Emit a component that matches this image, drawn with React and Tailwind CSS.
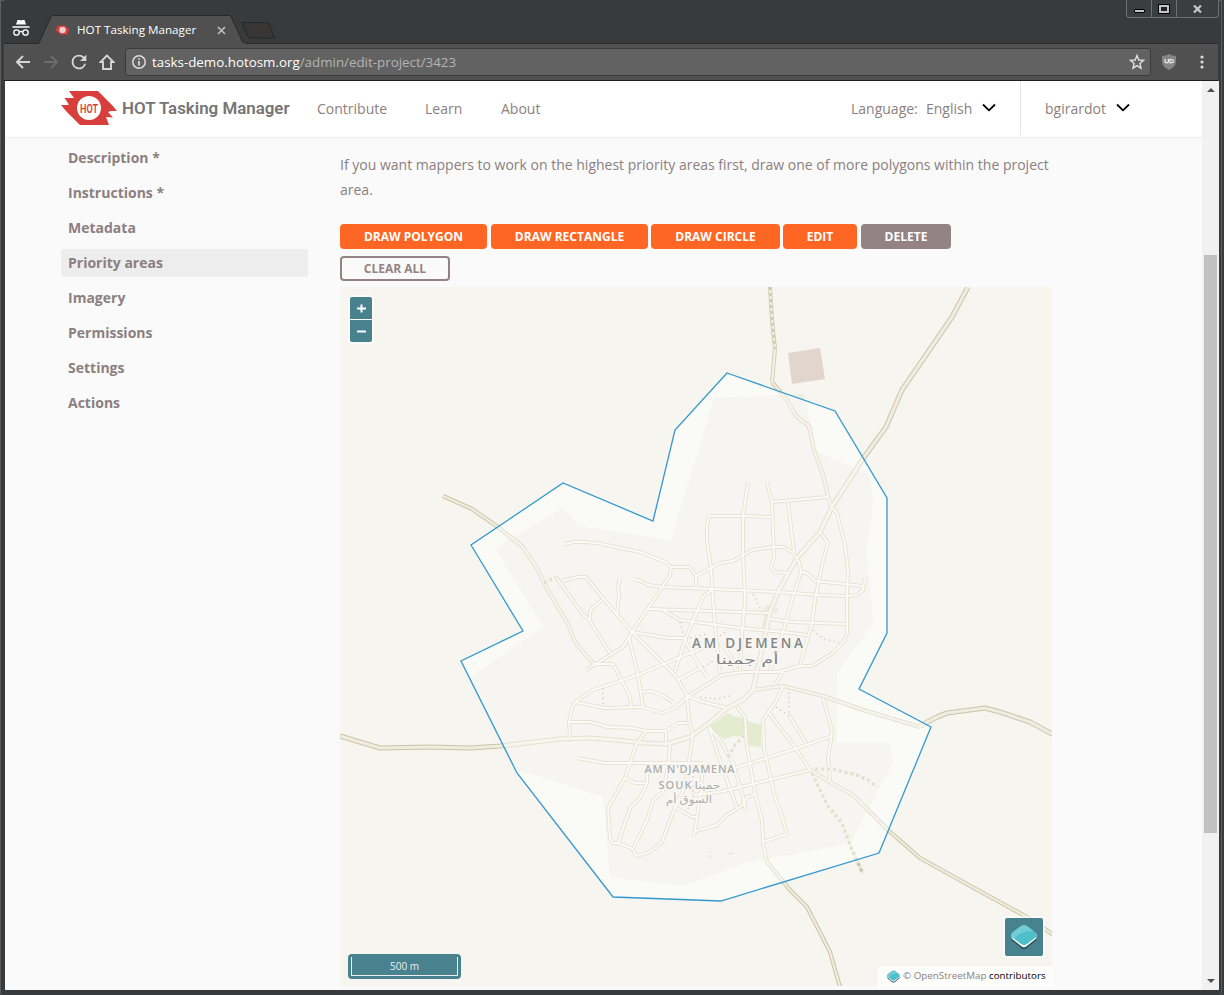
import React from "react";

const AREA =
  "727,373 835,411 887,498 887,633 859,689 931,727 879,853 721,901 613,897 517,773 461,661 523,631 471,545 563,483 653,521 675,430";

const RESIDENTIAL =
  "714,398 804,394 817,452 870,474 873,503 867,553 871,600 873,623 837,673 837,743 888,743 894,760 853,838 843,845 745,863 683,886 610,877 603,797 560,783 515,769 469,678 543,627 495,548 563,508 579,526 671,540";

const STREETS = [
  "565,544 574,542 585,542 597,543 640,552 665,562 671,567 670,575 657,595 632,632 623,647 586,670",
  "556,577 582,613 589,620 610,653",
  "562,581 578,577 586,577 602,597 632,632 675,675 687,695 689,720 693,735 688,768 685,787 675,807 662,842 650,852 636,856 633,849",
  "602,600 592,608 590,613 590,620",
  "620,578 618,587 619,595 617,616",
  "633,579 641,581 648,585 663,587 713,589 778,592 820,595 847,596 857,595 863,590 865,578",
  "593,664 613,664 621,679 630,697 631,707",
  "632,632 668,638 685,638",
  "629,638 638,675 643,707",
  "648,609 740,612 770,613",
  "663,610 680,620 740,628 783,632 807,635",
  "713,589 703,597 685,640 675,672",
  "685,640 693,655 707,677",
  "570,737 569,722 572,708 575,702 593,690 638,675 678,658 703,648",
  "575,702 605,708 642,707 662,713 675,708 687,697 722,675 743,672 778,672 800,666 812,666 833,653 844,641 847,633 847,593 848,570 845,545 840,525 837,513 831,507",
  "678,680 702,667",
  "642,692 650,691 657,693 665,697 673,702",
  "687,696 700,701 727,708",
  "709,516 743,516 772,517",
  "709,516 707,527 707,540 711,568 713,600 715,625 720,673",
  "720,643 730,655 736,670",
  "748,482 743,517 743,553 745,600 742,633 740,670",
  "767,483 772,502 774,557 771,567 775,572 787,573",
  "772,502 828,497",
  "788,502 791,527 794,552",
  "672,567 689,567 696,576 720,563 733,561 752,550 773,547 783,547 792,552 799,562 801,572 792,600 783,632 770,670",
  "696,576 696,588",
  "801,572 807,573 815,581 863,586",
  "820,532 828,543 823,560 815,600 812,623 800,665",
  "770,619 792,622 847,624",
  "783,672 775,685",
  "783,687 775,703 763,720 764,748 775,798 780,810 787,834 763,842",
  "769,713 792,743 810,770",
  "789,715 806,743",
  "823,698 832,730 831,740 828,758 830,781",
  "737,707 745,717 747,747 755,793 762,820 763,843 767,862",
  "569,722 590,722 608,727 632,728 646,731 666,731 678,723 688,723",
  "646,731 636,745 625,778 608,808 610,838 613,843 618,843 633,849 647,820 653,800 663,792 668,767 670,745",
  "577,758 605,763 643,763 703,763",
  "666,731 666,745",
  "625,778 635,783 646,783",
  "647,764 647,783 640,798 630,808 618,843",
  "675,807 692,817 697,817",
  "703,764 701,790 697,817 694,837",
  "696,831 717,825 727,815 743,805 747,797 755,795",
  "709,727 717,752 737,808",
  "709,727 720,740 733,763 743,797 746,812",
  "693,795 720,792 810,770",
  "735,768 792,750 832,736",
];

const ROADS = [
  "443,496 472,509 498,527 523,547 538,570 545,585 569,626 572,635 577,645 593,663",
  "772,382 787,400 796,416 809,426 814,450 823,475 831,507",
  "753,690 783,686 823,696 863,710 920,727",
  "767,862 790,890 807,907 830,952 840,987",
  "810,770 830,782 853,795 888,830 920,858 983,893 1027,917 1055,936",
];

const MAIN = [
  "968,287 952,317 902,390 886,427 862,460 832,507 820,532 797,558 778,592 770,612 753,690 743,700 727,708 708,724 690,737 667,744 645,743 615,740 590,738 560,739 500,746 470,748 430,747 380,748 340,736",
  "920,726 937,717 947,713 985,708 1000,712 1030,722 1054,735",
];

const TRACKS = [
  "815,769 833,769 857,775 868,780 877,787",
  "812,773 827,805 842,823 852,850 863,874",
  "728,757 735,745 745,734",
  "544,583 556,577",
];

const PATHS = [
  "680,622 684,636",
  "603,688 603,706",
  "700,697 718,699 733,695",
  "753,594 762,612",
  "813,630 822,638 839,643",
  "789,692 789,714",
  "776,707 789,716",
  "703,667 715,660",
  "693,776 693,798",
  "688,809 688,805",
  "690,638 706,634",
  "720,636 728,630",
];

function Lines({ list, color, width, dash }) {
  return list.map((points, i) => (
    <polyline key={i} points={points} fill="none" stroke={color} strokeWidth={width} strokeDasharray={dash} strokeLinejoin="round" />
  ));
}

function CityMap() {
  return (
    <svg className="block h-[699px] w-[712px]" viewBox="340 287 712 699">
      <rect x="340" y="287" width="712" height="699" fill="#f6f5f0" />
      <polygon points={RESIDENTIAL} fill="#eeece5" />
      <polygon points="788,353 820,348 825,379 792,384" fill="#e2d5cb" />
      <polygon points="709,727 728,713 735,717 740,717 745,720 761,725 761,747 749,746 747,737 733,736 725,739 712,732" fill="#cbdaa4" />
      <path d="M763 609l3-4h4l3 4-5 3-3 19h-4l4-20z" fill="#d5dfb9" />
      <path d="M774 608h4v5h-4zM708 855h3v3h-3zM727 853l7-1v2l-7 1z" fill="#dad7d4" />
      <Lines list={STREETS} color="#cfc9aa" width={3.9} />
      <Lines list={ROADS} color="#cbc5a7" width={4.200} />
      <polyline points="770,287 772,320 775,349 772,382" fill="none" stroke="#d0cab0" strokeWidth="4" />
      <Lines list={MAIN} color="#cbc5a7" width={5.200} />
      <Lines list={STREETS} color="#f8f6ef" width={2} />
      <Lines list={ROADS} color="#f0eddf" width={2.200} />
      <polyline points="770,287 772,320 775,349 772,382" fill="none" stroke="#f2efe3" strokeWidth="2.400" />
      <polyline points="770,287 772,320 775,349" fill="none" stroke="#cfc9ae" strokeWidth="2.400" strokeDasharray="3 3" />
      <Lines list={MAIN} color="#f0ecdf" width={3.200} />
      <Lines list={TRACKS} color="#eeeadd" width={3.600} />
      <Lines list={TRACKS} color="#c9c3a4" width={3.200} dash="3 3" />
      <Lines list={PATHS} color="#d09f85" width={1.500} dash="1.500 3.300" />
      <polygon points={AREA} fill="#ffffff" fillOpacity="0.48" stroke="#3399cc" strokeWidth="1.300" />
      <g textAnchor="middle" fontFamily="'Open Sans', 'DejaVu Sans', sans-serif" paintOrder="stroke" stroke="#f8f7f3" strokeWidth="3" strokeLinejoin="round">
        <text x="747.500" y="648" fontSize="13.500" fontWeight="600" fill="#858585" textLength="111">AM DJEMENA</text>
        <text x="747" y="664" fontSize="12.500" fill="#858585" textLength="63" lengthAdjust="spacingAndGlyphs">أم جمينا</text>
        <text x="689.500" y="773" fontSize="11" fontWeight="600" fill="#adadad" textLength="90">AM N'DJAMENA</text>
        <text x="675" y="789" fontSize="11" fontWeight="600" fill="#adadad" textLength="33">SOUK</text>
        <text x="707.500" y="789" fontSize="10.500" fill="#adadad" textLength="26" lengthAdjust="spacingAndGlyphs">جمينا</text>
        <text x="689" y="803" fontSize="10.500" fill="#adadad" textLength="46" lengthAdjust="spacingAndGlyphs">السوق أم</text>
      </g>
    </svg>
  );
}

function Tile({ className }) {
  return (
    <svg viewBox="0 0 26 26" className={className}>
      <path d="M.5 11.500v3.500q0 1.500 1.500 2.500l8.500 6.800q2.500 1.700 5 0L24 17.500q1.500-1 1.500-2.500v-3.500z" fill="#2c5664" />
      <path d="M.5 10v3q0 1.500 1.500 2.500l8.500 6.800q2.500 1.700 5 0L24 15.500q1.500-1 1.500-2.500v-3z" fill="#fff" />
      <path d="M2 8 10 2q3-2 6 0l8 6q1.500 1.200 1.500 3t-1.500 3l-8 6q-3 2-6 0l-8-6Q.5 12.800.5 11T2 8z" fill="#50bfcc" />
      <path d="M2 8 10 2q3-2 6 0l6.500 5Q9 6.500 3.500 15L2 14Q.5 12.800.5 11T2 8z" fill="#70ccd6" />
    </svg>
  );
}

function HotMark({ className, label }) {
  return (
    <svg viewBox="0 0 56 34" className={className}>
      <path d="M8 0H37L51 14 56 20H50L47 21 52 26.500 45 26 48 34H19L5 20 0 14H6L8 13.500 3.500 7H13z" fill="#d83e3c" />
      <circle cx="28" cy="17" r="12" fill={label ? "#fff" : "#f5cccb"} />
      {label && (
        <text x="28" y="21.500" textAnchor="middle" fontFamily="Roboto, sans-serif" fontWeight="600" fontSize="12" textLength="18" lengthAdjust="spacingAndGlyphs" fill="#d83e3c">HOT</text>
      )}
    </svg>
  );
}

function Chevron() {
  return (
    <svg viewBox="0 0 14 9" className="mb-px h-[9px] w-[14px]" fill="none" stroke="#000" strokeWidth="1.800">
      <path d="M1 1.500 7 7.300 13 1.500" />
    </svg>
  );
}

function TabStrip() {
  return (
    <div className="relative flex h-[43px] bg-[#373b3e]">
      <svg viewBox="0 0 18 18" className="mt-[19px] ml-[8px] h-[18px] w-[18px]" fill="none" stroke="#fff" strokeWidth="1.300">
        <path d="M5.500 1h2l1.500.5L10.500 1h2L14 5.500H4z" fill="#fff" stroke="none" />
        <path d="M.5 8h17" strokeWidth="1.500" />
        <circle cx="4.500" cy="13.500" r="2.700" />
        <circle cx="13.500" cy="13.500" r="2.700" />
        <path d="M7.200 13q1.800-1 3.600 0" />
      </svg>
      <div className="relative mt-[15px] ml-[9px] h-[29px] w-[206px]">
        <svg viewBox="0 0 206 29" className="absolute inset-0 h-[29px] w-[206px]">
          <path d="M0 29 12 1.500Q12.500.5 14 .5H190Q191.500.5 192 1.500L204 28H206V29z" fill="#505050" />
          <path d="M0 28 12 1.500Q12.500.5 14 .5H190Q191.500.5 192 1.500L204 28" fill="none" stroke="#27292b" />
        </svg>
        <div className="relative flex h-[29px] items-center pt-px pl-[16px]">
          <HotMark className="h-[10px] w-[15px]" />
          <span className="ml-[7px] w-[119px] text-[11.650px] leading-none whitespace-nowrap text-white">HOT Tasking Manager</span>
          <svg viewBox="0 0 9 9" className="ml-[21px] h-[9px] w-[9px]" stroke="#bdbdbd" strokeWidth="1.700">
            <path d="M1 1 8 8M8 1 1 8" />
          </svg>
        </div>
      </div>
      <svg viewBox="0 0 34 17" className="mt-[22px] -ml-[4px] h-[17px] w-[34px]">
        <path d="M1 .5H26q1.500 0 2 1L33.500 16H10Q8 16 7 14.500z" fill="#373635" stroke="#242628" />
      </svg>
      <div className="absolute top-0 right-[-1px] flex h-[18px] w-[93px] rounded-b-[4px] border border-t-0 border-[#6d7071] bg-[#3b3e40]">
        <div className="flex w-[25px] items-center justify-center border-r border-[#6d7071]">
          <span className="mt-[5px] h-[4px] w-[11px] rounded-[1px] border-[0.5px] border-black bg-[#c4c4c4]" />
        </div>
        <div className="flex w-[25px] items-center justify-center border-r border-[#6d7071]">
          <span className="h-[8px] w-[10px] border-2 border-[#c4c4c4] bg-[#222] outline outline-[0.5px] outline-black" />
        </div>
        <div className="flex flex-1 items-center justify-center">
          <svg viewBox="0 0 9 8" className="h-[8px] w-[9px]" stroke="#c8c8c8" strokeWidth="2.200">
            <path d="M1 .5 8 7.500M8 .5 1 7.500" />
          </svg>
        </div>
      </div>
    </div>
  );
}

function Toolbar() {
  return (
    <div className="flex h-[38px] items-center border-t border-b border-t-[#2b2b2b] border-b-[#1f1f1f] bg-[#505050] pl-[11px]">
      <svg viewBox="0 0 16 14" className="h-[14px] w-[16px]" fill="none" stroke="#d6d6d6" strokeWidth="2">
        <path d="M15 7H2M8 1 2 7l6 6" />
      </svg>
      <svg viewBox="0 0 16 14" className="ml-[12px] h-[14px] w-[16px]" fill="none" stroke="#6c6c6c" strokeWidth="1.800">
        <path d="M1 7h13M8 1l6 6-6 6" />
      </svg>
      <svg viewBox="0 0 24 24" className="ml-[9px] h-[22px] w-[22px]" fill="#d6d6d6">
        <path d="M17.650 6.350A7.958 7.958 0 0 0 12 4a8 8 0 1 0 7.730 10h-2.080A6 6 0 1 1 12 6c1.660 0 3.140.69 4.220 1.780L13 11h7V4l-2.350 2.350z" />
      </svg>
      <svg viewBox="0 0 16 16" className="ml-[9px] h-[16px] w-[16px]" fill="none" stroke="#d6d6d6" strokeWidth="1.900">
        <path d="M8 1.500 1.500 8H4v7h8V8h2.500z" />
      </svg>
      <div className="ml-[10px] flex h-[28px] w-[1026px] items-center rounded-[3px] border border-[#3b3b3b] bg-[#626262] pl-[6px] text-[13.350px]">
        <svg viewBox="0 0 14 14" className="h-[14px] w-[14px]" fill="none" stroke="#dcdcdc" strokeWidth="1.500">
          <circle cx="7" cy="7" r="6.200" />
          <path d="M7 6v4.500M7 3.300v1.500" strokeWidth="1.700" />
        </svg>
        <span className="ml-[6px] w-[305px] whitespace-nowrap text-[#b4b4b4]">
          <span className="text-white">tasks-demo.hotosm.org</span>/admin/edit-project/3423
        </span>
        <svg viewBox="0 0 16 16" className="mr-[5px] ml-auto h-[16px] w-[16px]" fill="none" stroke="#e0e0e0" strokeWidth="1.400">
          <path d="m8 1.500 1.800 4.500 4.700.4-3.600 3.100 1.100 4.700L8 11.700l-4 2.500 1.100-4.700L1.500 6.400 6.200 6z" />
        </svg>
      </div>
      <svg viewBox="0 0 16 16" className="ml-[10px] h-[16px] w-[16px]">
        <path d="M8 0q3 2 7 2v5q0 6-7 9-7-3-7-9V2q4 0 7-2z" fill="#868686" />
        <path d="M4 5v2.500q0 1.300 1.700 1.300t1.700-1.300V5M9 5.500v3.300q3.300.3 3.300-1.600T9 5.500z" fill="none" stroke="#eee" strokeWidth="1.200" />
      </svg>
      <svg viewBox="0 0 4 14" className="ml-[23px] h-[14px] w-[4px]" fill="#dadada">
        <circle cx="2" cy="2" r="1.600" />
        <circle cx="2" cy="7" r="1.600" />
        <circle cx="2" cy="12" r="1.600" />
      </svg>
    </div>
  );
}

function SiteHeader() {
  return (
    <header className="flex h-[57px] items-center border-b border-[#ececec] bg-white pl-[56px] text-[14px] text-[#8b7f80]">
      <HotMark label className="mb-[2px] h-[34px] w-[56px]" />
      <span className="ml-[5px] w-[168px] font-['Roboto',sans-serif] text-[16.900px] font-semibold whitespace-nowrap text-[#757575]">HOT Tasking Manager</span>
      <nav className="flex pb-[2px]">
        <a className="ml-[27px] w-[69px]">Contribute</a>
        <a className="ml-[39px] w-[38px]">Learn</a>
        <a className="ml-[38px] w-[40px]">About</a>
      </nav>
      <div className="ml-[310px] flex items-center pb-[2px]">
        <span className="w-[67px]">Language:</span>
        <span className="mr-[9px] ml-[8px] w-[47px]">English</span>
        <Chevron />
      </div>
      <div className="ml-[24px] flex h-[54px] items-center self-start border-l border-[#e6e6e6] pl-[24px]">
        <span className="mr-[9px] w-[62px]">bgirardot</span>
        <Chevron />
      </div>
    </header>
  );
}

const MENU = ["Description *", "Instructions *", "Metadata", "Priority areas", "Imagery", "Permissions", "Settings", "Actions"];

function SideMenu() {
  return (
    <ul className="mt-[6px] ml-[56px] flex w-[247px] flex-col gap-[7px] text-[14px] font-bold text-[#8b7f80]">
      {MENU.map((item) => (
        <li key={item} className={"flex h-[28px] items-center rounded-[3px] pb-[2px] pl-[7px] " + (item === "Priority areas" ? "bg-[#ededed]" : "")}>
          {item}
        </li>
      ))}
    </ul>
  );
}

function Button({ className, children }) {
  return <button className={"h-[25px] rounded-[4px] text-[12px] font-bold " + className}>{children}</button>;
}

function Editor() {
  return (
    <main className="ml-[32px] w-[714px]">
      <p className="pt-[14px] text-[14px] leading-[25px] text-[#8b7f80]">
        If you want mappers to work on the highest priority areas first, draw one of more polygons within the project
        <br />
        area.
      </p>
      <div className="mt-[22px] flex">
        <Button className="w-[147px] bg-[#ff6624] text-white">DRAW POLYGON</Button>
        <Button className="ml-[4px] w-[157px] bg-[#ff6624] text-white">DRAW RECTANGLE</Button>
        <Button className="ml-[3px] w-[129px] bg-[#ff6624] text-white">DRAW CIRCLE</Button>
        <Button className="ml-[3px] w-[74px] bg-[#ff6624] text-white">EDIT</Button>
        <Button className="ml-[4px] w-[90px] bg-[#948384] text-white">DELETE</Button>
      </div>
      <div className="mt-[7px] flex">
        <Button className="w-[110px] border-2 border-[#948384] text-[#948384]">CLEAR ALL</Button>
      </div>
      <div className="relative mt-[6px] h-[699px] w-[712px]">
        <CityMap />
        <div className="absolute top-[8px] left-[8px] flex flex-col gap-px rounded-[4px] bg-white/50 p-[2px]">
          <span className="flex h-[22px] w-[22px] items-center justify-center rounded-t-[2px] bg-[#48828f]">
            <svg viewBox="0 0 9 9" className="h-[9px] w-[9px]" stroke="#fff" strokeWidth="2"><path d="M4.500 .5v8M0 4.500h9" /></svg>
          </span>
          <span className="flex h-[22px] w-[22px] items-center justify-center rounded-b-[2px] bg-[#48828f]">
            <svg viewBox="0 0 9 9" className="h-[9px] w-[9px]" stroke="#fff" strokeWidth="2"><path d="M0 4.500h9" /></svg>
          </span>
        </div>
        <div className="absolute bottom-[7px] left-[8px] flex h-[25px] w-[113px] rounded-[4px] bg-[#48828f] p-[3px]">
          <div className="flex flex-1 items-center justify-center border border-t-0 border-[#eee] text-[10px] text-[#eee]">500 m</div>
        </div>
        <div className="absolute top-[629px] left-[663px] rounded-[4px] bg-white/60 p-[2px]">
          <div className="flex h-[38px] w-[38px] items-center justify-center rounded-[2px] bg-[#48828f]">
            <Tile className="h-[26px] w-[26px]" />
          </div>
        </div>
        <div className="absolute top-[679px] left-[538px] flex h-[21px] w-[175px] items-center rounded-tl-[4px] bg-white/80 pl-[9px] text-[9.800px] whitespace-nowrap text-black">
          <Tile className="mr-[3px] h-[13px] w-[13px]" />
          <span className="w-[83px] text-[#8b7f80]">© OpenStreetMap</span>
          <span className="ml-[3px]">contributors</span>
        </div>
      </div>
    </main>
  );
}

function ScrollBar() {
  return (
    <div className="flex h-[909px] w-[17px] flex-col items-center bg-[#f1f1f1]">
      <svg viewBox="0 0 8 4" className="mt-[7px] h-[4px] w-[8px]"><path d="M4 0 8 4H0z" fill="#505050" /></svg>
      <div className="mt-[163px] h-[578px] w-[13px] bg-[#c1c1c1]" />
      <svg viewBox="0 0 8 4" className="mt-auto mb-[7px] h-[4px] w-[8px]"><path d="M4 4 8 0H0z" fill="#505050" /></svg>
    </div>
  );
}

export default function App() {
  return (
    <div className="h-[995px] w-[1224px] overflow-hidden bg-[#373b3e] font-['Open_Sans',sans-serif]">
      <div className="h-[995px] w-[1222px] rounded-b-[3px] border-x border-t border-[#5b5d5e] bg-[#373b3e]">
        <div className="mx-[3px] -mt-px border-t-2 border-[#505456]">
          <div className="-mt-[2px]">
            <TabStrip />
            <Toolbar />
          </div>
        </div>
        <div className="ml-[4px] flex h-[909px] w-[1214px] bg-[#fafafa]">
          <div className="w-[1197px]">
            <SiteHeader />
            <div className="flex">
              <SideMenu />
              <Editor />
            </div>
          </div>
          <ScrollBar />
        </div>
      </div>
    </div>
  );
}
